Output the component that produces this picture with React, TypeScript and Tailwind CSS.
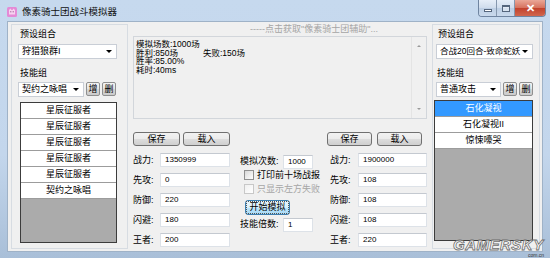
import type { ReactNode } from 'react';

const FONT = "[font-family:'Liberation_Sans','Noto_Sans_CJK_SC',sans-serif]";

const btnFace =
  'rounded-[3px] border border-[#707070] bg-[linear-gradient(#f2f2f2,#ebebeb_50%,#dddddd_50%,#cfcfcf)]';

function Combo({ value, className }: { value: string; className: string }) {
  return (
    <div
      className={`flex h-[15px] items-center justify-between whitespace-nowrap border border-[#c9ced6] bg-white pl-[3px] pr-[4px] leading-none ${className}`}
    >
      <span>{value}</span>
      <span className="h-0 w-0 shrink-0 border-x-[3px] border-t-[3px] border-x-transparent border-t-black" />
    </div>
  );
}

function SmallBtn({ label }: { label: string }) {
  return (
    <div className="flex h-[14px] w-[14px] items-center justify-center rounded-[2px] border border-[#8e8f8f] bg-[linear-gradient(#f4f4f4,#e4e4e4_50%,#d6d6d6_50%,#cbcbcb)] text-[9px] leading-none">
      {label}
    </div>
  );
}

function Btn({ label, className }: { label: string; className: string }) {
  return (
    <div className={`flex h-[14px] items-center justify-center text-[9px] leading-none ${btnFace} ${className}`}>
      {label}
    </div>
  );
}

function SkillList({ items, selected }: { items: string[]; selected?: number }) {
  return (
    <div className="flex h-[141px] flex-col border border-[#3c3c3c] bg-[#ababab]">
      {items.map((it, i) => (
        <div
          key={i}
          className={`flex h-[16px] shrink-0 items-center justify-center border-b border-[#9c9c9c] text-[9px] leading-none ${
            i === selected ? 'bg-[#3399ff] text-white' : 'bg-white text-black'
          }`}
        >
          {it}
        </div>
      ))}
    </div>
  );
}

function Field({ value, className }: { value: string; className: string }) {
  return (
    <div
      className={`flex h-[14px] items-center border border-[#dde2e8] border-t-[#c4c9d0] bg-white pl-[4px] text-[8px] leading-none ${className}`}
    >
      {value}
    </div>
  );
}

function StatRows({ values, labelClass, fieldClass }: { values: string[]; labelClass: string; fieldClass: string }) {
  const labels = ['战力:', '先攻:', '防御:', '闪避:', '王者:'];
  return (
    <div className="mt-[7px] flex flex-col gap-[6px]">
      {labels.map((l, i) => (
        <div key={l} className="flex h-[14px] items-center">
          <span className={`whitespace-nowrap text-[9px] leading-none ${labelClass}`}>{l}</span>
          <Field value={values[i]} className={fieldClass} />
        </div>
      ))}
    </div>
  );
}

function Check({ label, disabled }: { label: string; disabled?: boolean }) {
  return (
    <div className="flex h-[14px] items-center whitespace-nowrap pl-[4px]">
      <span
        className={`h-[10px] w-[10px] shrink-0 border bg-linear-to-br ${
          disabled ? 'border-[#c8c8c8] from-[#f0f0f0] to-white' : 'border-[#8f8f8f] from-[#d8d8d8] to-white'
        }`}
      />
      <span className={`ml-[3px] text-[9px] leading-none ${disabled ? 'text-[#a6a6a6]' : 'text-black'}`}>{label}</span>
    </div>
  );
}

function Panel({ children, className }: { children: ReactNode; className: string }) {
  return <div className={`flex flex-col border border-[#d7dce2] ${className}`}>{children}</div>;
}

export default function App() {
  return (
    <div
      className={`relative flex h-[258px] w-[550px] flex-col overflow-hidden bg-[linear-gradient(#c6d9ee,#c3d6ec_60%,#a9bfd8)] text-black ${FONT}`}
    >
      {/* title bar */}
      <div className="flex h-[21px] shrink-0 items-start">
        <svg className="ml-[7px] mt-[7px]" width="10" height="10" viewBox="0 0 10 10">
          <rect x="0" y="0" width="10" height="10" rx="1.5" fill="#e48ad6" />
          <path d="M2 3 L3.5 1.5 L4.5 3 H5.5 L6.5 1.5 L8 3 V7.5 H2 Z" fill="#f7d2f0" />
          <rect x="3.3" y="4.3" width="1" height="1" fill="#8a3f7c" />
          <rect x="5.7" y="4.3" width="1" height="1" fill="#8a3f7c" />
        </svg>
        <span className="ml-[5px] mt-[6px] text-[9.5px] leading-[12px] text-[#111]">像素骑士团战斗模拟器</span>
        <div className="ml-auto mr-[4px] flex h-[17px] overflow-hidden rounded-b-[4px] border border-t-0 border-[#6f84a0]">
          <div className="flex w-[18px] items-center justify-center border-r border-[#8597ae] bg-[linear-gradient(#e6eef8,#cfdcec_50%,#bccee4_50%,#c9d9ec)]">
            <span className="mt-[4px] h-[3px] w-[8px] border border-[#55667d] bg-white" />
          </div>
          <div className="flex w-[18px] items-center justify-center border-r border-[#8597ae] bg-[linear-gradient(#e6eef8,#cfdcec_50%,#bccee4_50%,#c9d9ec)]">
            <span className="h-[7px] w-[8px] border border-t-2 border-[#55667d] bg-white/40" />
          </div>
          <div className="flex w-[30px] items-center justify-center bg-[linear-gradient(#eaa797,#d6715d_50%,#c2412b_50%,#d0664e)] text-[11px] font-bold leading-none text-white">
            ✕
          </div>
        </div>
      </div>

      {/* client area */}
      <div className="mx-[7px] mb-[6px] flex flex-1 border border-[#9fb2c7] bg-[#f0f0f0]">
        {/* left panel */}
        <Panel className="ml-[3px] mt-[2px] h-[225px] w-[117px] px-[6px]">
          <div className="mt-[2px] h-[14px] pl-[2px] text-[9px] leading-[14px]">预设组合</div>
          <Combo value="狩猎狼群I" className="mt-[3px] w-[99px] text-[9px]" />
          <div className="mt-[7px] h-[14px] pl-[2px] text-[9px] leading-[14px]">技能组</div>
          <div className="mt-[2px] flex h-[14px] gap-[2px]">
            <Combo value="契约之咏唱" className="h-[14px] w-[66px] text-[9px]" />
            <SmallBtn label="增" />
            <SmallBtn label="删" />
          </div>
          <div className="ml-[2px] mt-[6px] w-[97px]">
            <SkillList items={['星辰征服者', '星辰征服者', '星辰征服者', '星辰征服者', '星辰征服者', '契约之咏唱']} />
          </div>
        </Panel>

        {/* middle */}
        <div className="ml-[5px] flex w-[294px] flex-col">
          <div className="h-[14px] whitespace-nowrap pl-[117px] text-[9px] leading-[14px] text-[#a5a5a5]">
            -----点击获取"像素骑士团辅助"...
          </div>
          <div className="flex h-[83px] border border-[#d2d6db] bg-[#f0f0f0]">
            <div className="flex-1 pl-[2px] pt-[3px] text-[8.5px] leading-[8.7px]">
              <div>模拟场数:1000场</div>
              <div className="flex">
                <span className="w-[67px]">胜利:850场</span>
                <span>失败:150场</span>
              </div>
              <div>胜率:85.00%</div>
              <div>耗时:40ms</div>
            </div>
            <div className="flex w-[15px] flex-col items-center justify-between border-l border-[#e4e4e4] py-[8px]">
              <span className="h-0 w-0 border-x-[2px] border-b-[2px] border-x-transparent border-b-[#9a9a9a]" />
              <span className="h-0 w-0 border-x-[2px] border-t-[2px] border-x-transparent border-t-[#9a9a9a]" />
            </div>
          </div>

          <div className="flex">
            {/* left stats */}
            <div className="mt-[13px] flex w-[97px] flex-col">
              <div className="flex gap-[3px]">
                <Btn label="保存" className="w-[47px]" />
                <Btn label="载入" className="w-[47px]" />
              </div>
              <StatRows
                values={['1350999', '0', '220', '180', '200']}
                labelClass="w-[27px]"
                fieldClass="w-[70px]"
              />
            </div>

            {/* simulation controls */}
            <div className="ml-[10px] mt-[36px] flex w-[82px] flex-col">
              <div className="flex h-[13px] items-center">
                <span className="w-[43px] whitespace-nowrap text-[9px] leading-none">模拟次数:</span>
                <Field value="1000" className="h-[13px] w-[30px]" />
              </div>
              <Check label="打印前十场战报" />
              <Check label="只显示左方失败" disabled />
              <div className="ml-[5px] mt-[4px] flex h-[15px] w-[45px] items-center justify-center rounded-[3px] border border-[#3c7fb1] bg-[linear-gradient(#eaf6fd,#d9f0fc_50%,#bee6fd_50%,#a7d9f5)] text-[9px] leading-none">
                <span className="whitespace-nowrap border border-dotted border-[#555] px-[2px] py-[1px]">开始模拟</span>
              </div>
              <div className="mt-[3px] flex h-[13px] items-center">
                <span className="w-[43px] whitespace-nowrap text-[9px] leading-none">技能倍数:</span>
                <Field value="1" className="h-[13px] w-[30px]" />
              </div>
            </div>

            {/* right stats */}
            <div className="ml-[5px] mt-[13px] flex w-[100px] flex-col">
              <div className="flex gap-[5px]">
                <Btn label="保存" className="w-[45px]" />
                <Btn label="载入" className="w-[45px]" />
              </div>
              <StatRows
                values={['1900000', '108', '108', '108', '220']}
                labelClass="w-[31px] pl-[3px]"
                fieldClass="w-[69px]"
              />
            </div>
          </div>
        </div>

        {/* right panel */}
        <Panel className="ml-[5px] mt-[2px] h-[225px] w-[108px] pl-[1px]">
          <div className="mt-[2px] h-[14px] pl-[4px] text-[9px] leading-[14px]">预设组合</div>
          <Combo value="合战20回合-致命蛇妖" className="ml-[2px] mt-[3px] w-[97px] text-[8.5px]" />
          <div className="mt-[7px] h-[14px] pl-[3px] text-[9px] leading-[14px]">技能组</div>
          <div className="ml-[2px] mt-[2px] flex h-[14px] gap-[2px]">
            <Combo value="普通攻击" className="h-[14px] w-[65px] text-[9px]" />
            <SmallBtn label="增" />
            <SmallBtn label="删" />
          </div>
          <div className="mt-[4px] w-[99px]">
            <SkillList items={['石化凝视', '石化凝视II', '惊悚嚎哭']} selected={0} />
          </div>
        </Panel>
      </div>

      {/* watermark */}
      <span className="absolute left-[453px] top-[237px] text-[15px] font-black italic leading-none tracking-[0.5px] text-white/90 [-webkit-text-stroke:0.8px_#6d6d6d]">
        GAMERSKY
      </span>
      <span className="absolute left-[528px] top-[253px] text-[5px] leading-none text-[#333]">com.cn</span>
    </div>
  );
}
